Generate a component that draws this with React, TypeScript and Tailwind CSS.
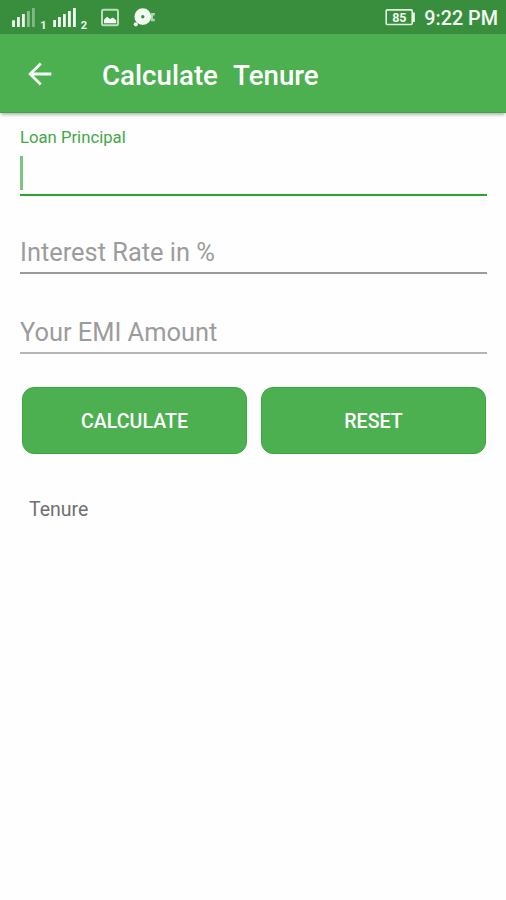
import { useState } from 'react';

interface FieldProps {
  label: string;
  value: string;
  active: boolean;
  lineClass: string;
  className?: string;
  onFocus: () => void;
  onChange: (value: string) => void;
}

// Signal strength bars: x, top, opacity
const firstSim = [
  [12.1, 20.3, 1],
  [17, 17, 1],
  [22, 14, 1],
  [27, 11, 0.45],
  [32, 8, 0.4],
];

const secondSim = [
  [53.2, 20, 1],
  [58, 17, 1],
  [63, 14, 1],
  [68, 11, 1],
  [73, 8, 1],
];

function StatusIcons() {
  return (
    <svg width="160" height="34" viewBox="0 0 160 34" fill="#f1faf1">
      {[...firstSim, ...secondSim].map(([x, y, opacity]) => (
        <rect key={x} x={x} y={y} width="2.8" height={27 - y} opacity={opacity} />
      ))}
      <text x="40.3" y="29" fontSize="11" fontWeight="700" fontFamily="Roboto, sans-serif">1</text>
      <text x="80.8" y="29" fontSize="11" fontWeight="700" fontFamily="Roboto, sans-serif">2</text>

      {/* Picture */}
      <rect x="102" y="9.8" width="16" height="15.5" rx="1.5" fill="none" stroke="#b9dfba" strokeWidth="2" />
      <path d="M104 23.3v-3.5l3-3 3 2.3 3-1.6 3.2 2.8v3z" />

      {/* Disc */}
      <path
        fillRule="evenodd"
        d="M142.8 8.2a8.4 8.4 0 1 1 0 16.8 8.4 8.4 0 0 1 0-16.8zm0 6.8a1.7 1.7 0 1 0 0 3.4 1.7 1.7 0 0 0 0-3.4z"
      />
      <circle cx="135.8" cy="24.3" r="2.1" />
      <path d="M151 13h3.8v2.4H151zM151 15.4h2v3.4h-2zM151 18.8h3.8v2.4H151z" opacity="0.65" />
    </svg>
  );
}

function Battery() {
  return (
    <svg width="32" height="34" viewBox="0 0 32 34" fill="#f1faf1">
      <rect x="1.2" y="9.9" width="26" height="14.6" rx="1" fill="none" stroke="#e4f4e4" strokeWidth="1.6" />
      <path d="M28 12.5h1.8v9.4H28z" />
      <text x="14.3" y="21.8" fontSize="12.5" fontWeight="700" textAnchor="middle" fontFamily="Roboto, sans-serif">85</text>
    </svg>
  );
}

function Field({ label, value, active, lineClass, className = '', onFocus, onChange }: FieldProps) {
  const floating = active || value !== '';

  return (
    <label className={`relative block border-b-2 ${lineClass} ${className}`}>
      <span
        className={
          floating
            ? 'absolute left-0 bottom-[46px] text-[16.7px] leading-5 text-[#43a847] whitespace-nowrap'
            : 'absolute left-0 bottom-[5px] text-[25.4px] leading-[30px] text-[#9c9c9c] whitespace-nowrap'
        }
      >
        {label}
      </span>
      {active && value === '' && (
        <span className="absolute left-0 bottom-[4px] h-[34px] w-[3px] bg-[#7bc67e]" />
      )}
      <input
        type="text"
        inputMode="decimal"
        value={value}
        onFocus={onFocus}
        onChange={(e) => onChange(e.target.value)}
        className="block h-10 w-full bg-transparent text-[25px] text-gray-800 caret-[#7bc67e] outline-none"
      />
    </label>
  );
}

export default function App() {
  const [principal, setPrincipal] = useState('');
  const [rate, setRate] = useState('');
  const [emi, setEmi] = useState('');
  const [active, setActive] = useState('principal');
  const [tenure, setTenure] = useState('');

  const calculate = () => {
    const p = Number(principal);
    const r = Number(rate) / 1200;
    const e = Number(emi);
    if (!p || !r || e <= p * r) return;
    const months = Math.log(e / (e - p * r)) / Math.log(1 + r);
    setTenure(`${Math.ceil(months)} months`);
  };

  const reset = () => {
    setPrincipal('');
    setRate('');
    setEmi('');
    setTenure('');
    setActive('principal');
  };

  const buttonClass =
    'h-[67px] flex-1 rounded-xl border border-[#38aa3d] bg-[#4caf50] pt-[3px] text-[19.6px] font-medium text-white';

  return (
    <div className="flex h-screen w-full flex-col overflow-hidden bg-[#fefefe] font-[Roboto,sans-serif]">
      {/* Status bar */}
      <div className="flex h-[34px] shrink-0 items-center justify-between bg-[#388e3c] pr-2">
        <StatusIcons />
        <div className="flex items-center gap-[7px]">
          <Battery />
          <span className="pt-1 text-[19.8px] leading-6 font-medium whitespace-nowrap text-[#f4fbf4]">9:22 PM</span>
        </div>
      </div>

      {/* App bar */}
      <header className="flex h-[79px] shrink-0 items-center border-b border-[#3da542] bg-[#4caf50] pl-7 shadow-[0_3px_3px_-1px_rgba(0,0,0,0.28)]">
        <button aria-label="Back" className="w-[74px] pt-px">
          <svg width="24" height="24" viewBox="0 0 24 24" fill="none" stroke="#f5fcf5" strokeWidth="2.8">
            <path d="M23.3 12H2.5M12.8 1.5 2.2 12l10.6 10.5" />
          </svg>
        </button>
        <h1 className="pt-[5px] text-[27.7px] leading-8 font-medium whitespace-pre text-white [word-spacing:1px]">
          {'Calculate  Tenure'}
        </h1>
      </header>

      <main className="flex flex-col pr-[19px] pl-5">
        <Field
          label="Loan Principal"
          value={principal}
          active={active === 'principal'}
          lineClass="border-[#2ba52f]"
          className="mt-[41px]"
          onFocus={() => setActive('principal')}
          onChange={setPrincipal}
        />
        <Field
          label="Interest Rate in %"
          value={rate}
          active={active === 'rate'}
          lineClass="border-[#9a9a9a]"
          className="mt-9"
          onFocus={() => setActive('rate')}
          onChange={setRate}
        />
        <Field
          label="Your EMI Amount"
          value={emi}
          active={active === 'emi'}
          lineClass="border-[#b5b5b5]"
          className="mt-[38px]"
          onFocus={() => setActive('emi')}
          onChange={setEmi}
        />

        <div className="mt-[33px] flex gap-[14px] pr-px pl-[2px]">
          <button className={buttonClass} onClick={calculate}>CALCULATE</button>
          <button className={buttonClass} onClick={reset}>RESET</button>
        </div>

        <p className="mt-[42px] pl-[9px] text-[19.5px] leading-7 text-[#707070]">Tenure {tenure}</p>
      </main>
    </div>
  );
}
